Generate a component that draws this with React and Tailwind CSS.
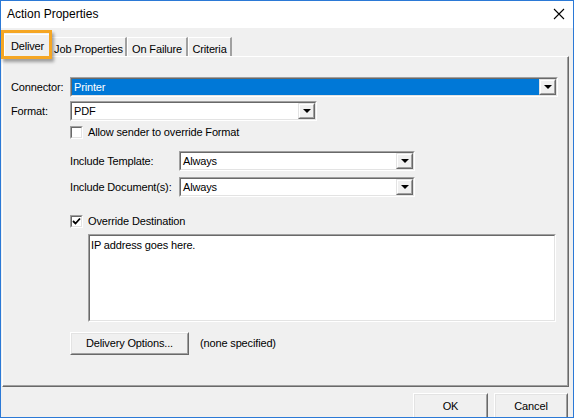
import React from "react";

const FONT = { fontFamily: '"Liberation Sans", Arial, sans-serif' };

function Sunken({ className = "", children }) {
  return (
    <div className={`border border-t-[#a0a0a0] border-l-[#a0a0a0] border-b-white border-r-white ${className}`}>
      <div className="h-full w-full border border-t-[#696969] border-l-[#696969] border-b-[#e3e3e3] border-r-[#e3e3e3]">
        {children}
      </div>
    </div>
  );
}

function Arrow() {
  return (
    <div className="h-full w-[17px] shrink-0 border border-t-[#e3e3e3] border-l-[#e3e3e3] border-b-[#696969] border-r-[#696969] bg-[#f0f0f0]">
      <div className="h-full w-full border border-t-white border-l-white border-b-[#a0a0a0] border-r-[#a0a0a0] flex items-center justify-center">
        <div className="w-0 h-0 border-l-[4px] border-r-[4px] border-t-[4px] border-l-transparent border-r-transparent border-t-black" />
      </div>
    </div>
  );
}

function Select({ value, className = "", selected = false }) {
  return (
    <Sunken className={`h-[20px] ${className}`}>
      <div className="flex h-full bg-white">
        <div className={`flex-1 flex items-center pl-[2px] ${selected ? "bg-[#0078d7] text-white" : "text-black"}`}>
          {value}
        </div>
        <Arrow />
      </div>
    </Sunken>
  );
}

function Checkbox({ checked }) {
  return (
    <Sunken className="h-[13px] w-[13px] shrink-0">
      <div className="h-full w-full bg-white flex items-center justify-center">
        {checked && (
          <svg width="9" height="9" viewBox="0 0 9 9">
            <path d="M1 4 L3.5 6.5 L8 1.5" stroke="black" strokeWidth="1.8" fill="none" />
          </svg>
        )}
      </div>
    </Sunken>
  );
}

function Button({ children, className = "" }) {
  return (
    <div className={`border border-t-white border-l-white border-b-[#696969] border-r-[#696969] bg-[#f0f0f0] ${className}`}>
      <div className="h-full w-full border border-t-[#e3e3e3] border-l-[#e3e3e3] border-b-[#a0a0a0] border-r-[#a0a0a0] flex items-center justify-center">
        {children}
      </div>
    </div>
  );
}

const TABS = [
  { label: "Job Properties", w: "w-[76px]" },
  { label: "On Failure", w: "w-[61px]" },
  { label: "Criteria", w: "w-[44px]" },
];

export default function App() {
  return (
    <div style={FONT} className="relative w-[574px] h-[418px] overflow-hidden border border-[#2b79d6] bg-[#f0f0f0] text-[11px] tracking-[-0.15px] text-black whitespace-nowrap">
      <div className="h-[27px] bg-white flex items-center justify-between pl-[6px] pr-[6px]">
        <span className="text-[12px] tracking-normal -mt-[2px]">Action Properties</span>
        <svg width="12" height="12" viewBox="0 0 12 12" className="mr-[2px] -mt-[2px]">
          <path d="M1 1 L11 11 M11 1 L1 11" stroke="black" strokeWidth="1.1" />
        </svg>
      </div>

      <div className="flex items-end h-[28px] pl-[3px] relative z-10">
        <div className="h-[23px] w-[47px] -mb-[1px] bg-[#f0f0f0] border-t border-l border-t-white border-l-white border-r border-r-[#696969] flex justify-center pt-[3px]">
          Deliver
        </div>
        {TABS.map((t) => (
          <div
            key={t.label}
            className={`h-[19px] ${t.w} bg-[#f0f0f0] border-t border-l border-t-white border-l-white border-r-2 border-r-[#a0a0a0] flex justify-center pt-[3px]`}
          >
            {t.label}
          </div>
        ))}
      </div>

      <div className="mx-[1px] h-[331px] w-[567px] border border-t-white border-l-white border-b-[#696969] border-r-[#696969]">
        <div className="h-full border-r border-b border-r-[#a0a0a0] border-b-[#a0a0a0] pl-[8px] pt-[20px]">
          <div className="flex items-center h-[20px]">
            <span className="w-[59px]">Connector:</span>
            <Select value="Printer" selected className="w-[488px]" />
          </div>
          <div className="flex items-center h-[20px] mt-[4px]">
            <span className="w-[59px]">Format:</span>
            <Select value="PDF" className="w-[247px]" />
          </div>
          <div className="flex items-center gap-[5px] h-[13px] mt-[5px] ml-[59px]">
            <Checkbox />
            <span>Allow sender to override Format</span>
          </div>
          <div className="flex items-center h-[20px] mt-[12px] ml-[59px]">
            <span className="w-[109px]">Include Template:</span>
            <Select value="Always" className="w-[236px]" />
          </div>
          <div className="flex items-center h-[20px] mt-[6px] ml-[59px]">
            <span className="w-[109px]">Include Document(s):</span>
            <Select value="Always" className="w-[236px]" />
          </div>
          <div className="flex items-center gap-[5px] h-[13px] mt-[18px] ml-[59px]">
            <Checkbox checked />
            <span>Override Destination</span>
          </div>
          <Sunken className="ml-[77px] mt-[6px] w-[468px] h-[88px]">
            <div className="h-full w-full bg-white px-[1px] pt-[1px]">IP address goes here.</div>
          </Sunken>
          <div className="flex items-center ml-[59px] mt-[10px]">
            <Button className="w-[119px] h-[23px]">Delivery Options...</Button>
            <span className="ml-[11px]">(none specified)</span>
          </div>
        </div>
      </div>

      <div className="flex justify-end gap-[6px] pr-[5px] mt-[6px]">
        <Button className="w-[75px] h-[26px]">OK</Button>
        <Button className="w-[74px] h-[26px]">Cancel</Button>
      </div>

      <div className="absolute left-0 top-[29px] w-[51px] h-[29px] border-[3px] border-[#f5a623] shadow-[2px_3px_3px_rgba(0,0,0,0.35)] z-20" />
    </div>
  );
}
